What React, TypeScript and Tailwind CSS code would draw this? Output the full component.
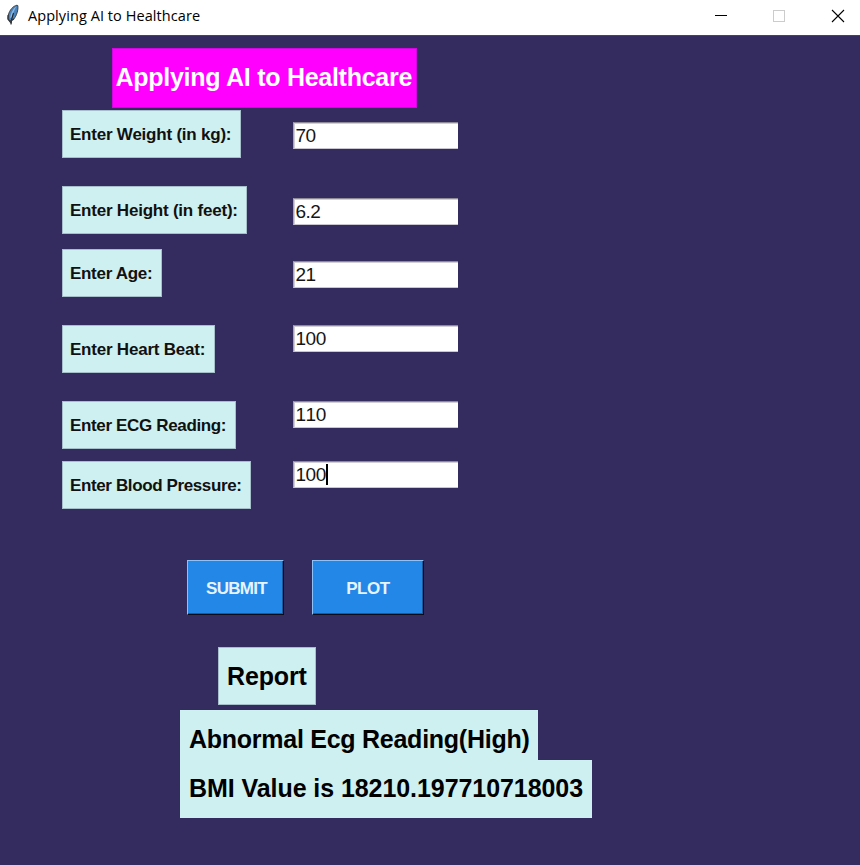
import React from "react";

type Field = {
  label: string;
  value: string;
  row: string;
  labelBox: string;
  inputOffset: string;
  focused?: boolean;
};

const fields: Field[] = [
  { label: "Enter Weight (in kg):", value: "70", row: "mt-[2px]", labelBox: "w-[179px] tracking-[-0.22px]", inputOffset: "mt-3" },
  { label: "Enter Height (in feet):", value: "6.2", row: "mt-[28px]", labelBox: "w-[185px] tracking-[-0.22px]", inputOffset: "mt-3" },
  { label: "Enter Age:", value: "21", row: "mt-[15px]", labelBox: "w-[100px] tracking-[-0.3px]", inputOffset: "mt-3" },
  { label: "Enter Heart Beat:", value: "100", row: "mt-[28px]", labelBox: "w-[153px] tracking-[-0.22px]", inputOffset: "mt-0" },
  { label: "Enter ECG Reading:", value: "110", row: "mt-[28px]", labelBox: "w-[174px] tracking-[-0.35px]", inputOffset: "mt-0" },
  { label: "Enter Blood Pressure:", value: "100", row: "mt-[12px]", labelBox: "w-[189px] tracking-[-0.38px]", inputOffset: "mt-0", focused: true },
];

function FeatherIcon() {
  return (
    <svg width="14" height="22" viewBox="0 0 14 22" className="ml-[6px] mt-[4px] shrink-0">
      <path d="M11 1.2 C7 2 3.6 6 2.3 11 C1.6 14 2 16 3.6 17 L7.8 15 C10.5 12 12.5 6 11.8 1.6 Z" fill="#4b83bd" stroke="#3c4045" strokeWidth="1" />
      <path d="M10.5 2.2 C7 4.5 4.8 9 4 14 L5.6 13.5 C7 9 8.5 5.5 10.5 2.2Z" fill="#8cbbe6" />
      <path d="M7.5 9 C6.4 12 5.4 15 5 20.5" fill="none" stroke="#202327" strokeWidth="1.1" />
      <path d="M2.2 11 L2 15 L4.8 18.6 L5.6 16.4 L8 15" fill="none" stroke="#33383d" strokeWidth="1.3" />
    </svg>
  );
}

function TitleBar() {
  return (
    <header className="flex h-[35px] w-full bg-white font-['Open_Sans',sans-serif] text-black">
      <FeatherIcon />
      <div className="ml-2 mt-[5px] w-[180px] whitespace-nowrap text-[14.5px] leading-[22px] tracking-[0.07px]">
        Applying AI to Healthcare
      </div>
      <div className="ml-auto flex">
        <svg width="145" height="35" viewBox="0 0 145 35" fill="none" shapeRendering="crispEdges">
          <path d="M0 15.5H12" stroke="#000" />
          <rect x="58.5" y="10.5" width="11" height="11" stroke="#ccc" />
          <path d="M117 10L129 22M129 10L117 22" stroke="#000" strokeWidth="1.1" shapeRendering="auto" />
        </svg>
      </div>
    </header>
  );
}

function FieldRow({ field }: { field: Field }) {
  return (
    <div className={"flex h-12 items-start " + field.row}>
      <div className="w-[231px] shrink-0">
        <div className={"flex h-12 items-center whitespace-nowrap border border-[#a7bfca] bg-[#cef0f0] pl-[7px] pt-[2px] text-[17px] font-bold leading-5 text-[#111] " + field.labelBox}>
          {field.label}
        </div>
      </div>
      <div className={"flex h-[27px] w-[165px] items-center border-t border-l border-b border-t-[#8d8a96] border-l-[#a9a6b0] border-b-[#c9c6d2] bg-white pl-[1.5px] text-[19px] leading-6 tracking-[-0.5px] text-[#161616] shadow-[inset_1px_1px_0_#d2d0d4] [font-kerning:none] " + field.inputOffset}>
        {field.value}
        {field.focused && <span className="h-[21px] w-[2px] bg-black" />}
      </div>
    </div>
  );
}

export default function App() {
  return (
    <div className="flex h-[865px] w-[860px] flex-col overflow-hidden bg-[#342c5e] font-['Liberation_Sans',Arial,sans-serif]">
      <TitleBar />
      <main className="flex flex-col border-t border-[#46415f]">
        <h1 className="ml-[112px] mt-[12px] flex h-[60px] w-[305px] items-center whitespace-nowrap border border-[#d008df] bg-[#ff00ff] pl-[2.5px] text-[25px] font-bold tracking-[-0.27px] text-white">
          Applying AI to Healthcare
        </h1>
        <section className="ml-[62px]">
          {fields.map((field) => (
            <FieldRow key={field.label} field={field} />
          ))}
        </section>
        <div className="ml-[187px] mt-[51px] flex gap-[28px] text-[17px] font-bold text-[#e6f4ff]">
          <button className="h-[55px] w-[97px] border border-t-[#8fc1f4] border-l-[#8fc1f4] border-r-[#080a1a] border-b-[#080a1a] bg-[#2387e7] pt-[2px] pl-[2px] tracking-[-0.7px] shadow-[inset_-1px_-1px_0_#195b9c]">
            SUBMIT
          </button>
          <button className="h-[55px] w-[112px] border border-t-[#8fc1f4] border-l-[#8fc1f4] border-r-[#080a1a] border-b-[#080a1a] bg-[#2387e7] pt-[2px] tracking-[-0.4px] shadow-[inset_-1px_-1px_0_#195b9c]">
            PLOT
          </button>
        </div>
        <h2 className="ml-[218px] mt-[32px] flex h-[58px] w-[98px] items-center border border-[#a7bfca] bg-[#cef0f0] pl-2 pt-[2px] text-[25px] font-bold tracking-[-0.15px] text-black">
          Report
        </h2>
        <section className="ml-[180px] mt-[5px] whitespace-nowrap text-[25px] font-bold text-black">
          <p className="flex h-[50px] w-[358px] items-end bg-[#cef0f0] pl-[9px] pb-[2px] tracking-[-0.26px]">Abnormal Ecg Reading(High)</p>
          <p className="flex h-[58px] w-[412px] items-center bg-[#cef0f0] pl-[9px] tracking-[-0.07px]">BMI Value is 18210.197710718003</p>
        </section>
      </main>
    </div>
  );
}
